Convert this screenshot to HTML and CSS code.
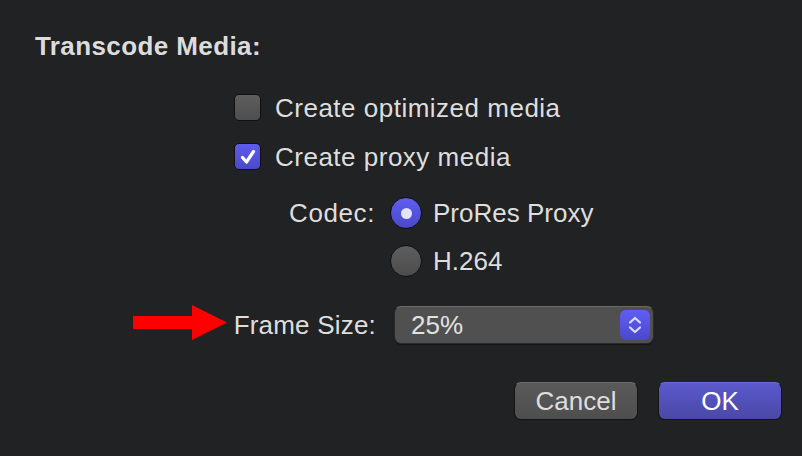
FILE: index.html
```html
<!DOCTYPE html>
<html>
<head>
<meta charset="utf-8">
<link rel="stylesheet" href="styles.css">
</head>
<body>
<div class="dialog">
  <h1 class="title">Transcode Media:</h1>
  <div class="options">
    <div class="check-row">
      <span class="checkbox"></span>
      <span class="label wide">Create optimized media</span>
    </div>
    <div class="check-row second">
      <span class="checkbox checked">
        <svg width="26" height="26" viewBox="0 0 26 26"><path d="M7.5 13.5 L11.5 18 L18.5 7.5" fill="none" stroke="#fff" stroke-width="3.2" stroke-linecap="round" stroke-linejoin="round"/></svg>
      </span>
      <span class="label wide">Create proxy media</span>
    </div>
  </div>
  <div class="form">
    <div class="field-label codec-label">Codec:</div>
    <div class="radio-group">
      <div class="radio-row">
        <span class="radio selected"><span class="dot"></span></span>
        <span class="label">ProRes Proxy</span>
      </div>
      <div class="radio-row second">
        <span class="radio"></span>
        <span class="label">H.264</span>
      </div>
    </div>
    <div class="field-label frame-label">
      <svg class="arrow" width="94" height="35" viewBox="0 0 94 35"><polygon points="0,11 59,11 59,0 94,17.5 59,35 59,24 0,24" fill="#ff0000"/></svg>
      <span class="frame-text">Frame Size:</span>
    </div>
    <div class="popup">
      <span class="popup-value">25%</span>
      <span class="stepper">
        <svg width="30" height="30" viewBox="0 0 30 30"><path d="M10 12.5 L15 8 L20 12.5 M10 17.5 L15 22 L20 17.5" fill="none" stroke="#dcdcff" stroke-width="2.2" stroke-linecap="round" stroke-linejoin="round"/></svg>
      </span>
    </div>
  </div>
  <div class="buttons">
    <button class="btn cancel">Cancel</button>
    <button class="btn ok">OK</button>
  </div>
</div>
</body>
</html>
```
FILE: styles.css
```css
html, body {
  margin: 0;
  padding: 0;
  background: #212224;
}
body {
  width: 802px;
  height: 456px;
  overflow: hidden;
  font-family: "Liberation Sans", Arial, sans-serif;
  color: #dedede;
}
.dialog {
  padding: 31px 20px 0 35px;
  display: flex;
  flex-direction: column;
}
.title {
  margin: 0;
  font-size: 26px;
  line-height: 30px;
  font-weight: bold;
  color: #dcdcdc;
  letter-spacing: 0.4px;
}
.options {
  margin-top: 33px;
  padding-left: 199px;
  display: flex;
  flex-direction: column;
}
.check-row {
  display: flex;
  align-items: center;
  height: 27px;
  gap: 14px;
}
.check-row.second {
  margin-top: 22px;
}
.label {
  font-size: 26px;
  line-height: 30px;
  color: #dedede;
}
.label.wide {
  letter-spacing: 0.5px;
}
.checkbox {
  width: 25px;
  height: 25px;
  border-radius: 5px;
  border: 1px solid #111;
  background: linear-gradient(#5e5e5e, #4e4e4e);
  box-sizing: content-box;
  display: flex;
}
.checkbox.checked {
  background: linear-gradient(#5d5cf0, #4b49c8);
}
.checkbox svg {
  margin: -0.5px;
}
.form {
  display: grid;
  grid-template-columns: 341px auto;
  column-gap: 14px;
  margin-top: 27px;
  align-items: start;
}
.field-label {
  font-size: 26px;
  line-height: 32px;
  text-align: right;
  color: #dedede;
}
.codec-label {
  padding-right: 1px;
  letter-spacing: 0.6px;
}
.radio-group {
  display: flex;
  flex-direction: column;
}
.radio-row {
  display: flex;
  align-items: center;
  height: 32px;
  gap: 11px;
}
.radio-row.second {
  margin-top: 16px;
}
.radio {
  width: 30px;
  height: 30px;
  border-radius: 50%;
  border: 1px solid #111;
  background: linear-gradient(#5e5e5e, #4c4c4c);
  display: flex;
  align-items: center;
  justify-content: center;
}
.radio.selected {
  background: linear-gradient(#5f5ef2, #4a48c8);
}
.dot {
  width: 11px;
  height: 11px;
  border-radius: 50%;
  background: #e2e2fa;
}
.frame-label {
  margin-top: 29px;
  height: 38px;
  display: flex;
  align-items: center;
  justify-content: flex-end;
  gap: 7px;
}
.frame-text {
  letter-spacing: 0.2px;
}
.arrow {
  display: block;
  margin-top: -6px;
}
.popup {
  margin-top: 29px;
  margin-left: 4px;
  width: 258px;
  height: 36px;
  border-radius: 7px;
  border: 1px solid #2a2a2a;
  border-top-color: #6a6a6a;
  background: #505050;
  display: flex;
  align-items: center;
  justify-content: space-between;
  box-shadow: 0 1px 1px rgba(0,0,0,0.4);
}
.popup-value {
  font-size: 26px;
  line-height: 30px;
  padding-left: 16px;
  color: #e2e2e2;
}
.stepper {
  width: 30px;
  height: 30px;
  margin-right: 3px;
  border-radius: 6px;
  background: linear-gradient(#605ef4, #4a48cc);
  display: flex;
}
.buttons {
  margin-top: 38px;
  display: flex;
  justify-content: flex-end;
  gap: 20px;
}
.btn {
  width: 124px;
  height: 38px;
  border-radius: 7px;
  font-family: "Liberation Sans", Arial, sans-serif;
  font-size: 26px;
  line-height: 30px;
  padding: 0;
  border: 1px solid #141414;
}
.cancel {
  background: linear-gradient(#5a5a5a, #4e4e4e);
  border-top-color: #6c6c6c;
  color: #dedede;
}
.ok {
  background: linear-gradient(#5b59cc, #4a48a6);
  border-top-color: #6c6ad8;
  color: #ffffff;
}
```
